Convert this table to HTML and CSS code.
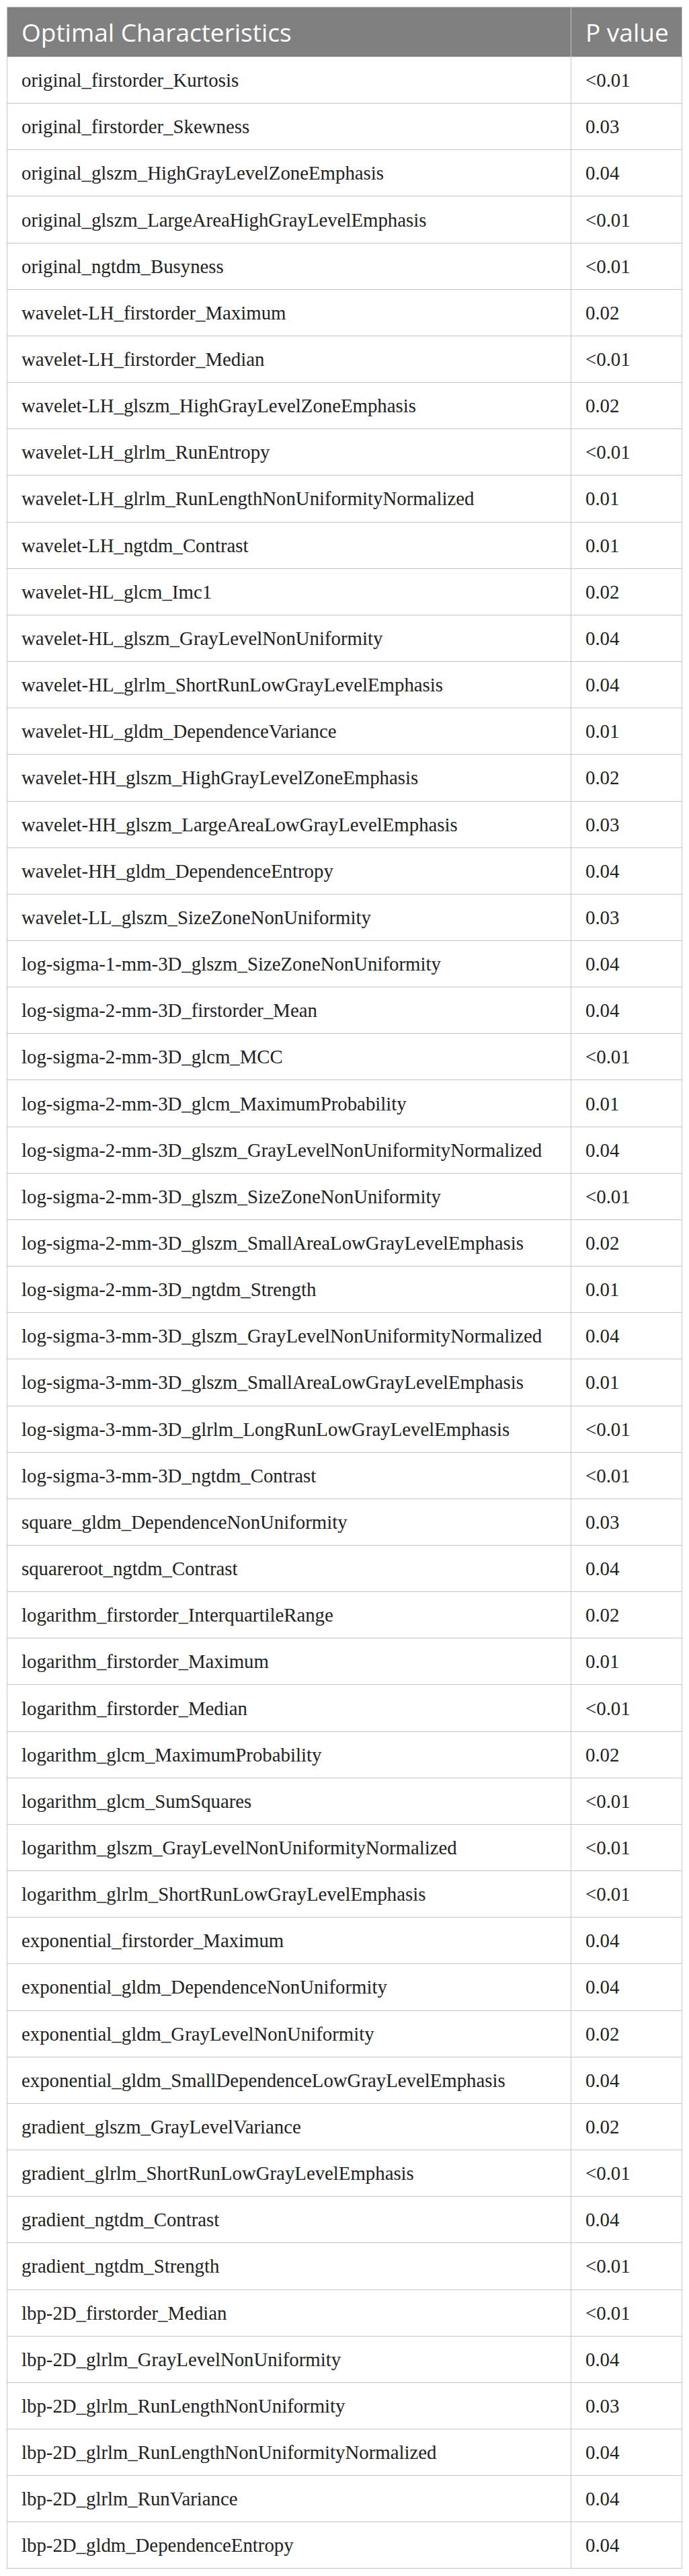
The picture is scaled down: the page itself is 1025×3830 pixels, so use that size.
FILE: index.html
```html
<!DOCTYPE html>
<html>
<head>
<meta charset="utf-8">
<link rel="stylesheet" href="styles.css">
</head>
<body>
<table class="data">
<thead>
<tr class="head"><th class="c1">Optimal Characteristics</th><th class="c2">P value</th></tr>
</thead>
<tbody>
<tr><td>original_firstorder_Kurtosis</td><td>&lt;0.01</td></tr>
<tr><td>original_firstorder_Skewness</td><td>0.03</td></tr>
<tr><td>original_glszm_HighGrayLevelZoneEmphasis</td><td>0.04</td></tr>
<tr><td>original_glszm_LargeAreaHighGrayLevelEmphasis</td><td>&lt;0.01</td></tr>
<tr><td>original_ngtdm_Busyness</td><td>&lt;0.01</td></tr>
<tr><td>wavelet-LH_firstorder_Maximum</td><td>0.02</td></tr>
<tr><td>wavelet-LH_firstorder_Median</td><td>&lt;0.01</td></tr>
<tr><td>wavelet-LH_glszm_HighGrayLevelZoneEmphasis</td><td>0.02</td></tr>
<tr><td>wavelet-LH_glrlm_RunEntropy</td><td>&lt;0.01</td></tr>
<tr><td>wavelet-LH_glrlm_RunLengthNonUniformityNormalized</td><td>0.01</td></tr>
<tr><td>wavelet-LH_ngtdm_Contrast</td><td>0.01</td></tr>
<tr><td>wavelet-HL_glcm_Imc1</td><td>0.02</td></tr>
<tr><td>wavelet-HL_glszm_GrayLevelNonUniformity</td><td>0.04</td></tr>
<tr><td>wavelet-HL_glrlm_ShortRunLowGrayLevelEmphasis</td><td>0.04</td></tr>
<tr><td>wavelet-HL_gldm_DependenceVariance</td><td>0.01</td></tr>
<tr><td>wavelet-HH_glszm_HighGrayLevelZoneEmphasis</td><td>0.02</td></tr>
<tr><td>wavelet-HH_glszm_LargeAreaLowGrayLevelEmphasis</td><td>0.03</td></tr>
<tr><td>wavelet-HH_gldm_DependenceEntropy</td><td>0.04</td></tr>
<tr><td>wavelet-LL_glszm_SizeZoneNonUniformity</td><td>0.03</td></tr>
<tr><td>log-sigma-1-mm-3D_glszm_SizeZoneNonUniformity</td><td>0.04</td></tr>
<tr><td>log-sigma-2-mm-3D_firstorder_Mean</td><td>0.04</td></tr>
<tr><td>log-sigma-2-mm-3D_glcm_MCC</td><td>&lt;0.01</td></tr>
<tr><td>log-sigma-2-mm-3D_glcm_MaximumProbability</td><td>0.01</td></tr>
<tr><td>log-sigma-2-mm-3D_glszm_GrayLevelNonUniformityNormalized</td><td>0.04</td></tr>
<tr><td>log-sigma-2-mm-3D_glszm_SizeZoneNonUniformity</td><td>&lt;0.01</td></tr>
<tr><td>log-sigma-2-mm-3D_glszm_SmallAreaLowGrayLevelEmphasis</td><td>0.02</td></tr>
<tr><td>log-sigma-2-mm-3D_ngtdm_Strength</td><td>0.01</td></tr>
<tr><td>log-sigma-3-mm-3D_glszm_GrayLevelNonUniformityNormalized</td><td>0.04</td></tr>
<tr><td>log-sigma-3-mm-3D_glszm_SmallAreaLowGrayLevelEmphasis</td><td>0.01</td></tr>
<tr><td>log-sigma-3-mm-3D_glrlm_LongRunLowGrayLevelEmphasis</td><td>&lt;0.01</td></tr>
<tr><td>log-sigma-3-mm-3D_ngtdm_Contrast</td><td>&lt;0.01</td></tr>
<tr><td>square_gldm_DependenceNonUniformity</td><td>0.03</td></tr>
<tr><td>squareroot_ngtdm_Contrast</td><td>0.04</td></tr>
<tr><td>logarithm_firstorder_InterquartileRange</td><td>0.02</td></tr>
<tr><td>logarithm_firstorder_Maximum</td><td>0.01</td></tr>
<tr><td>logarithm_firstorder_Median</td><td>&lt;0.01</td></tr>
<tr><td>logarithm_glcm_MaximumProbability</td><td>0.02</td></tr>
<tr><td>logarithm_glcm_SumSquares</td><td>&lt;0.01</td></tr>
<tr><td>logarithm_glszm_GrayLevelNonUniformityNormalized</td><td>&lt;0.01</td></tr>
<tr><td>logarithm_glrlm_ShortRunLowGrayLevelEmphasis</td><td>&lt;0.01</td></tr>
<tr><td>exponential_firstorder_Maximum</td><td>0.04</td></tr>
<tr><td>exponential_gldm_DependenceNonUniformity</td><td>0.04</td></tr>
<tr><td>exponential_gldm_GrayLevelNonUniformity</td><td>0.02</td></tr>
<tr><td>exponential_gldm_SmallDependenceLowGrayLevelEmphasis</td><td>0.04</td></tr>
<tr><td>gradient_glszm_GrayLevelVariance</td><td>0.02</td></tr>
<tr><td>gradient_glrlm_ShortRunLowGrayLevelEmphasis</td><td>&lt;0.01</td></tr>
<tr><td>gradient_ngtdm_Contrast</td><td>0.04</td></tr>
<tr><td>gradient_ngtdm_Strength</td><td>&lt;0.01</td></tr>
<tr><td>lbp-2D_firstorder_Median</td><td>&lt;0.01</td></tr>
<tr><td>lbp-2D_glrlm_GrayLevelNonUniformity</td><td>0.04</td></tr>
<tr><td>lbp-2D_glrlm_RunLengthNonUniformity</td><td>0.03</td></tr>
<tr><td>lbp-2D_glrlm_RunLengthNonUniformityNormalized</td><td>0.04</td></tr>
<tr><td>lbp-2D_glrlm_RunVariance</td><td>0.04</td></tr>
<tr><td>lbp-2D_gldm_DependenceEntropy</td><td>0.04</td></tr>
</tbody>
</table>
</body>
</html>
```
FILE: styles.css
```css
html, body {
  margin: 0;
  padding: 0;
  background: #ffffff;
}
body {
  padding: 10px;
}
.data {
  width: 1004px;
  border-collapse: collapse;
  table-layout: fixed;
  font-family: "Liberation Serif", "Times New Roman", serif;
  color: #222222;
}
.data th,
.data td {
  border: 1px solid #c4c4c4;
  padding: 0 0 0 21px;
  text-align: left;
  vertical-align: middle;
  white-space: nowrap;
}
.data .c1 { width: 817px; }
.data .c2 { width: 143px; }
.head th {
  background: #808080;
  color: #ffffff;
  font-family: "Open Sans", sans-serif;
  font-weight: 400;
  font-size: 37px;
  height: 73px;
  line-height: 40px;
}
.data td {
  font-size: 28.8px;
  height: 68.17px;
  line-height: 32px;
}
```
